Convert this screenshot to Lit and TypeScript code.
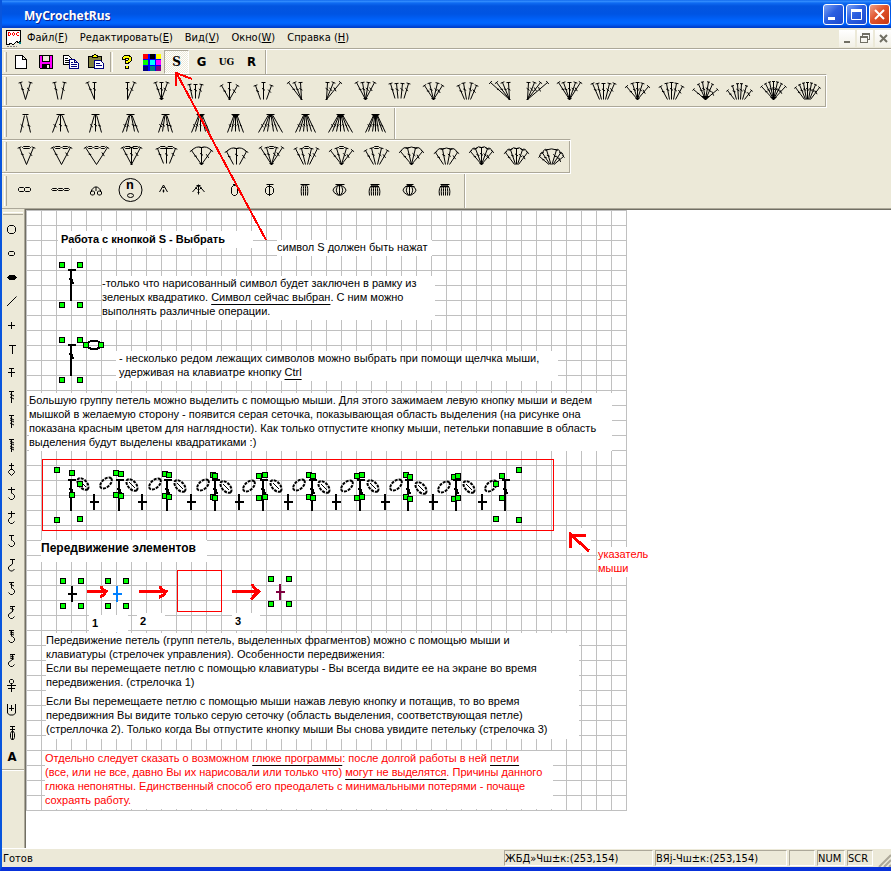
import { LitElement, html, svg, css, nothing } from "lit";
import { customElement, property } from "lit/decorators.js";
import { classMap } from "lit/directives/class-map.js";

type Pt = [number, number];

/* ---------- stitch glyph builders ---------- */

// One stitch stem: a line from (bx,by) to (tx,ty) with a cap and a cross tick.
function stem(tx: number, ty: number, bx: number, by: number, cap = 2, at = 0.4, tick = 1.5): string {
  const len = Math.hypot(tx - bx, ty - by) || 1;
  const nx = -(ty - by) / len;
  const ny = (tx - bx) / len;
  const mx = tx + (bx - tx) * at;
  const my = ty + (by - ty) * at;
  let d = `M${bx} ${by}L${tx} ${ty}`;
  if (cap) d += `M${tx - nx * cap} ${ty - ny * cap}L${tx + nx * cap} ${ty + ny * cap}`;
  d += `M${mx - nx * tick} ${my - ny * tick - 1}L${mx + nx * tick} ${my + ny * tick + 1}`;
  return d;
}

// Small pixel-aligned oval: an octagon with bevels of k.
function oval(cx: number, cy: number, rx: number, ry: number): string {
  const k = Math.min(rx, ry) > 2 ? 2 : 1;
  const h = 2 * (rx - k);
  const v = 2 * (ry - k);
  return `M${cx - rx} ${cy + ry - k}v${-v}l${k} ${-k}h${h}l${k} ${k}v${v}l${-k} ${k}h${-h}z`;
}

interface Fan { tops: number[]; split?: number; arc?: number; base?: number; dot?: number; top?: number; bottom?: number; }

function fanPoints(f: Fan, c: number): { t: Pt; b: Pt }[] {
  const max = Math.max(...f.tops.map(Math.abs));
  const n = f.tops.length;
  return f.tops.map((x, i) => ({
    t: [c + x, (f.top ?? 6.5) + (f.arc ?? 0) * (x / max) ** 2] as Pt,
    b: [c + (f.base ?? 0) + (f.split ?? 0) * (i - (n - 1) / 2), f.bottom ?? 23.5] as Pt,
  }));
}

function fan(f: Fan, c: number): string {
  const cap = f.tops.length > 5 ? 1.5 : 2;
  let d = fanPoints(f, c).map(({ t, b }) => stem(t[0], t[1], b[0], b[1], cap)).join("");
  const w = f.dot ?? 0;
  for (let k = 0; k < w; k++) d += `M${c + (f.base ?? 0) - w + k} ${23.5 - w + 1 + k}h${(w - k) * 2}`;
  return d;
}

const FANS: Fan[] = [
  { tops: [-5, 5] },
  { tops: [-5, 5], split: 3 },
  { tops: [-6, 1], base: 1 },
  { tops: [0, 7] },
  { tops: [-6, 0, 6], dot: 2 },
  { tops: [-6, 0, 6], split: 3, top: 8.5, bottom: 22.5 },
  { tops: [-8, 0, 8], arc: 3, dot: 1 },
  { tops: [-8, 0, 8], arc: 3, split: 3 },
  { tops: [-9, -3, 3], base: 4, dot: 1 },
  { tops: [-4, 2, 9], base: -5, dot: 1 },
  { tops: [-9, -3, 3, 9], dot: 2 },
  { tops: [-9, -3, 3, 9], split: 3, top: 7.5, bottom: 22.5 },
  { tops: [-9, -4, 4, 9], arc: 3, dot: 2 },
  { tops: [-9, -4, 4, 9], arc: 3, split: 2 },
  { tops: [-11, -5, 1, 7], base: 8, dot: 1 },
  { tops: [-7, -1, 5, 12], base: -8, dot: 1 },
  { tops: [-11, -6, 0, 6, 11], dot: 2 },
  { tops: [-11, -6, 0, 6, 11], split: 2, top: 7.5 },
  { tops: [-11, -5, 0, 5, 11], arc: 4, dot: 2 },
  { tops: [-11, -5, 0, 5, 11], arc: 4, split: 2 },
  { tops: [-12, -7, -3, 3, 7, 12], arc: 8, dot: 4, top: 5.5 },
  { tops: [-12, -7, -2, 2, 7, 12], arc: 7, split: 2, top: 7.5 },
  { tops: [-12, -8, -4, 0, 4, 8, 12], arc: 5, dot: 3, top: 5.5 },
  { tops: [-12, -8, -4, 0, 4, 8, 12], arc: 5, split: 1, top: 6.5 },
];

// Decreases: several stems joined under one cap.
function cluster(feet: number[], dot: number): string {
  const c = 17.5;
  const max = Math.max(...feet.map(Math.abs));
  const tick = feet.length > 4 ? 1 : 1.5;
  let d = `M${c - (dot ? 4 : 3)} 6.5h${dot ? 8 : 6}`;
  for (const x of feet) {
    const y = 24.5 - (Math.abs(x) === max ? 0 : 1);
    d += stem(c + x * 0.2, 7.5, c + x, y, 0, 0.6, tick);
  }
  for (let k = 0; k < dot; k++) d += `M${c - dot + k} ${7.5 + k}h${(dot - k) * 2}`;
  return d;
}

const CLUSTERS: [number[], number][] = [
  [[-5, 5], 0],
  [[-8, 0, 8], 1],
  [[-6, 0, 6], 1],
  [[-8, -4, 4, 8], 1],
  [[-7, -3, 3, 7], 1],
  [[-9, -5, 0, 5, 9], 3],
  [[-8, -4, 0, 4, 8], 3],
  [[-12, -7, -3, 3, 7, 12], 2],
  [[-10, -6, -2, 2, 6, 10], 2],
  [[-12, -8, -4, 0, 4, 8, 12], 3],
  [[-10, -7, -3, 0, 3, 7, 10], 3],
];

interface Shell { fan: Fan; chains?: number; dome?: boolean; span?: number; }

function shell(s: Shell): string {
  const c = 18.5;
  let d = fan(s.fan, c);
  const pts = fanPoints(s.fan, c);
  if (s.chains) {
    const span = s.span ?? pts[pts.length - 1].t[0] - pts[0].t[0] - 3;
    const w = span / s.chains;
    for (let i = 0; i < s.chains; i++) {
      d += oval(c - span / 2 + w * (i + 0.5), 6.5, Math.min(w / 2 - 0.5, 4), 1);
    }
  }
  if (s.dome) {
    for (let i = 1; i < pts.length; i++) {
      const [ax, ay] = pts[i - 1].t;
      const [bx, by] = pts[i].t;
      d += `M${ax} ${ay}Q${(ax + bx) / 2} ${Math.min(ay, by) - 2} ${bx} ${by}`;
    }
  }
  return d;
}

const SHELLS: Shell[] = [
  { fan: { tops: [-7, 7] }, chains: 1 },
  { fan: { tops: [-9, 9] }, chains: 2 },
  { fan: { tops: [-11, 11] }, chains: 3 },
  { fan: { tops: [-9, 0, 9], dot: 1 }, chains: 2 },
  { fan: { tops: [-9, 0, 9], split: 3, top: 7.5, bottom: 22.5 }, chains: 2 },
  { fan: { tops: [-10, 0, 10], arc: 3, dot: 2, top: 6.5 }, dome: true },
  { fan: { tops: [-10, 0, 10], arc: 3, split: 3, top: 7.5 }, dome: true },
  { fan: { tops: [-11, -5, 5, 11], dot: 2 }, chains: 1, span: 7 },
  { fan: { tops: [-11, -5, 5, 11], split: 2, top: 7.5 }, chains: 1, span: 7 },
  { fan: { tops: [-11, -5, 5, 11], arc: 3, dot: 2 }, chains: 1, span: 7 },
  { fan: { tops: [-11, -5, 5, 11], arc: 3, split: 2 }, chains: 1, span: 7 },
  { fan: { tops: [-11, -4, 4, 11], arc: 4, dot: 2 }, dome: true },
  { fan: { tops: [-11, -4, 4, 11], arc: 4, split: 2, top: 7.5 }, dome: true },
  { fan: { tops: [-11, -6, 0, 6, 11], arc: 4, dot: 2 }, dome: true },
  { fan: { tops: [-11, -6, 0, 6, 11], arc: 4, split: 1, top: 7.5 }, dome: true },
  { fan: { tops: [-12, -9, -5, 5, 9, 12], arc: 8, split: 1, top: 7.5 }, dome: true },
];

// Ribs that bow out from a cap and meet again below.
function bulb(w: number, ribs: number, cap: number): string {
  const c = 16.5;
  let d = `M${c - cap} 10.5h${cap * 2 + 1}`;
  for (let i = 0; i < ribs; i++) {
    const k = (i / (ribs - 1)) * 2 - 1;
    d += `M${c + k} 11Q${c + k * w * 2} 16 ${c + k} 21.5`;
  }
  return d;
}

// Ribs that hang down from a rounded cap and stay open.
function comb(w: number, ribs: number): string {
  const c = 16.5;
  let d = `M${c - 4} 10.5h9`;
  for (let i = 0; i < ribs; i++) {
    const k = (i / (ribs - 1)) * 2 - 1;
    d += `M${c + k * 2} 11Q${c + k * w * 1.3} 13 ${c + k * w} 21.5`;
  }
  return d;
}

const EXTRAS: string[] = [
  oval(13.5, 15.5, 3, 2) + oval(19.5, 15.5, 3, 2),
  oval(11.5, 15.5, 3, 1) + oval(17.5, 15.5, 3, 1) + oval(23.5, 15.5, 3, 1),
  "M13.5 18v-2l3 -3h3l3 3v2" + oval(14.5, 19, 2, 2) + oval(21.5, 19, 2, 2) + "M18 13v4",
  "",
  "M15.5 11l-4 7M15.5 11l4 7M14.5 13.5h2M15.5 15.5v3M14.5 17h2",
  "M15.5 10.5v10M15.5 11l-6 7M15.5 11l6 7M13.5 11.5h4M12.5 13.5l2 2M18.5 13.5l-2 2M14.5 18.5h2",
  oval(16.5, 16.5, 3, 5) + "M15 10.5h4",
  oval(16.5, 16.5, 4, 4) + "M13.5 10.5h7M16.500 11v11",
  comb(3, 4),
  bulb(6, 5, 4),
  comb(5, 6) + "M13 12.5h8",
  bulb(6, 5, 3) + "M12.5 12.5h9",
  comb(5, 6) + "M12 12.5h9",
];

const SIDE: string[] = [
  oval(9.5, 12.5, 4, 4),
  oval(9.5, 12.5, 3, 2),
  "solid",
  "M5 17l9.5 -9.5",
  "M9.5 9v7M6 12.5h7",
  "M10.5 8v9M7 8.5h7",
  "M9.5 7v9M7 7.5h5M6 11.5h7",
  "M9.5 6v12M7 6.5h5M8 9l4 2M8 12l4 2",
  "M9.5 6v13M7 6.5h5M8 9l4 2M8 11l4 2M8 14l4 2",
  "M9.5 6v13M7 6.5h5M8 8l4 2M8 10l4 2M8 13l4 2M8 15l4 2",
  "M9.5 6v7M7 8.5h5M9.5 11.5l-3 3v1l3 3l3 -3v-1z",
  "M9.5 6v6M6 8.5h7M9.5 12.5h1l2 2v2l-2 2h-2l-2 -2",
  "M9.5 6v6M6 8.5h7M9.5 12.5h-1l-2 2v2l2 2h2l2 -2",
  "M7 6.5h5M9.5 6v5M9.5 11.5h1l2 2v2l-2 2h-2l-2 -2",
  "M8 6.5h5M10.5 6v5l-4 3v2l2 2h2l2 -2",
  "M7 5.5h5M9.5 5v6M8 7l4 2M9.5 11.5h1l2 2v2l-2 2h-2l-2 -2",
  "M8 5.5h5M10.5 5v6M8 7l4 2M10.5 10.5l-4 3v2l2 2h2l2 -2",
  "M7 5.5h5M9.5 5v6M8 7l4 1M8 9l4 1M9.5 11.5h1l2 2v2l-2 2h-2l-2 -2",
  "M8 5.5h5M10.5 5v6M8 7l4 1M8 9l4 1M10.5 10.5l-4 3v2l2 2h2l2 -2",
  oval(9.5, 8.5, 2, 2) + "M9.5 11v8M5 12.5h9M6 15.5h7",
  "M5.5 7v9l2 2h4l2 -2v-9M9.5 8v6M7 11.5h5",
  "M8 5.5h5M8 8.5h5M10.5 5v13M8.5 12.5v4l1 2h2l1 -2v-4l-1 -2h-2z",
  "A",
];

/* ---------- palette buttons ---------- */

@customElement("stitch-bar")
export class StitchBar extends LitElement {
  @property({ attribute: false }) glyphs: string[] = [];
  @property({ type: Boolean }) boxed = false;
  @property({ type: Number }) cell = 35;
  @property({ type: Number }) tall = 31;

  static styles = css`
    :host { display: block; }
    .bar {
      display: flex; width: fit-content; box-sizing: border-box;
      padding: 0 2px 0 6px; border-right: 1px solid #fff;
      box-shadow: inset -1px 0 #aca899; position: relative;
    }
    .bar.boxed {
      border-top: 1px solid #aca899; border-bottom: 1px solid #fff;
      box-shadow: inset 0 1px #fff, inset -1px -1px #aca899; padding-top: 1px; padding-bottom: 1px;
    }
    .bar::before {
      content: ""; position: absolute; left: 2px; top: 2px; bottom: 2px; width: 1px;
      border-left: 1px solid #fff; border-right: 1px solid #aca899;
    }
    button { border: 0; padding: 0; background: none; display: block; font: inherit; }
    button:hover { background: #f6f4ea; }
    svg { display: block; }
    .ink { fill: none; stroke: #000; stroke-width: 1; }
    .letter { font: bold 13px "Liberation Mono", monospace; }
  `;

  render() {
    return html`<div class=${classMap({ bar: true, boxed: this.boxed })} role="toolbar">
      ${this.glyphs.map(
        (d) => html`<button type="button" aria-label="stitch">
          <svg width=${this.cell} height=${this.tall}>
            ${d
              ? svg`<path class="ink" d=${d} />`
              : svg`<circle class="ink" cx="17.5" cy="16" r="11.5" /><text class="letter" x="13" y="15">n</text><ellipse class="ink" cx="17.5" cy="21.5" rx="3" ry="2" />`}
          </svg>
        </button>`
      )}
    </div>`;
  }
}

/* ---------- document canvas ---------- */

const SQUARES: Pt[] = [
  [62, 265], [80, 265], [62, 305], [80, 305], [62, 340], [80, 340], [62, 380], [80, 380], [86, 345], [101, 345],
  [57, 470], [72, 473], [80, 484], [72, 495], [57, 520], [80, 519],
  [116, 473], [121, 474], [116, 495], [121, 496],
  [165, 474], [169, 475], [165, 496], [169, 497],
  [213, 475], [215, 476], [213, 497], [215, 498],
  [259, 476], [265, 475], [259, 498], [265, 497],
  [309, 475], [313, 476], [309, 497], [313, 498],
  [357, 476], [362, 475], [357, 498], [362, 497],
  [406, 475], [410, 477], [406, 497], [410, 499],
  [454, 477], [458, 476], [454, 499], [458, 498],
  [502, 476], [496, 484], [502, 498], [496, 519], [519, 470], [519, 520],
  [63, 581], [81, 581], [63, 606], [81, 606],
  [108, 581], [126, 581], [108, 606], [126, 606],
  [271, 579], [289, 579], [271, 604], [289, 604],
];

const TREBLES: Pt[] = [
  [71, 270], [71, 345],
  [71, 480], [119, 480], [167, 480], [215, 480], [263, 480], [312, 480], [360, 480], [408, 480], [456, 480], [505, 480],
];
const CROSSES: [number, number, string][] = [
  ...[94, 142, 191, 239, 288, 336, 385, 433, 482].map((x) => [x, 501, "#000"] as [number, number, string]),
  [72, 593, "#000"], [117, 593, "#0080ff"], [280, 591, "#800040"],
];
const LEAVES_UP: Pt[] = [[106, 483], [155, 484], [203, 485], [249, 486], [299, 485], [347, 486], [396, 485], [444, 487], [491, 486]];
const LEAVES_DOWN: Pt[] = [[83, 484], [132, 485], [180, 486], [226, 487], [276, 486], [324, 487], [373, 486], [421, 488], [469, 487]];

interface Note { x: number; y: number; w: number; body: unknown; kind?: string; }

const NOTES: Note[] = [
  { x: 58, y: 231, w: 195, kind: "bold pad", body: html`Работа с кнопкой S - Выбрать` },
  { x: 277, y: 240, w: 155, body: html`символ S должен быть нажат` },
  {
    x: 102, y: 276, w: 333,
    body: html`-только что нарисованный символ будет заключен в рамку из<br />зеленых квадратико. <u>Символ сейчас выбран</u>. С ним можно<br />выполнять различные операции.`,
  },
  {
    x: 116, y: 351, w: 442, kind: "pad",
    body: html`- несколько редом лежащих символов можно выбрать при помощи щелчка мыши,<br />удерживая на клавиатре кнопку <u>Ctrl</u>`,
  },
  {
    x: 29, y: 393, w: 583,
    body: html`Большую группу петель можно выделить с помощью мыши. Для этого зажимаем левую кнопку мыши и ведем<br />мышкой в желаемую сторону - появится серая сеточка, показывающая область выделения (на рисунке она<br />показана красным цветом для наглядности). Как только отпустите кнопку мыши, петельки попавшие в область<br />выделения будут выделены квадратиками :)`,
  },
  { x: 41, y: 540, w: 166, kind: "bold tall", body: html`Передвижение элементов` },
  { x: 598, y: 547, w: 55, kind: "red", body: html`указатель<br />мыши` },
  { x: 89, y: 615, w: 39, kind: "bold pad", body: html`1` },
  { x: 137, y: 613, w: 28, kind: "bold pad", body: html`2` },
  { x: 232, y: 613, w: 28, kind: "bold pad", body: html`3` },
  {
    x: 46, y: 633, w: 533,
    body: html`Передвижение петель (групп петель, выделенных фрагментов) можно с помощью мыши и<br />клавиатуры (стрелочек управления). Особенности передвижения:<br />Если вы перемещаете петлю с помощью клавиатуры - Вы всегда видите ее на экране во время<br />передвижения. (стрелочка 1)`,
  },
  {
    x: 46, y: 691, w: 533, kind: "late",
    body: html`Если Вы перемещаете петлю с помощью мыши нажав левую кнопку и потащив, то во время<br />передвижния Вы видите только серую сеточку (область выделения, соответствующая петле)<br />(стреллочка 2). Только когда Вы отпустите кнопку мыши Вы снова увидите петельку (стрелочка 3)`,
  },
  {
    x: 45, y: 751, w: 508, kind: "red",
    body: html`Отдельно следует сказать о возможном <u>глюке программы</u>: после долгой работы в ней <u>петли</u><br />(все, или не все, давно Вы их нарисовали или только что) <u>могут не выделятся</u>. Причины данного<br />глюка непонятны. Единственный способ его преодалеть с минимальными потерями - почаще<br />сохраять работу.`,
  },
];

// Canvas origin inside the window; drawing data is kept in window units.
const OX = 26;
const OY = 210;

@customElement("stitch-sheet")
export class StitchSheet extends LitElement {
  static styles = css`
    :host { display: block; position: relative; background: #fff; min-height: 638px; overflow: hidden; }
    .grid {
      position: absolute; left: 0; top: 0; width: 601px; height: 601px;
      background-image: linear-gradient(to right, #c0c0c0 1px, transparent 1px), linear-gradient(#c0c0c0 1px, transparent 1px);
      background-size: 15px 15px;
    }
    .art { position: absolute; left: 0; top: 0; width: 640px; height: 601px; shape-rendering: crispEdges; }
    .note {
      position: absolute; box-sizing: border-box; background: #fff; white-space: nowrap; margin: 0;
      font: 11px/14px "Liberation Sans", Arial, sans-serif; color: #000; padding-bottom: 2px;
    }
    .pad { padding-left: 3px; }
    .bold { font-weight: bold; padding-top: 1px; }
    .tall { font-size: 12px; padding-bottom: 7px; }
    .late { padding-top: 3px; padding-bottom: 3px; }
    .red { color: #f00; }
    u { text-decoration-color: #000; text-underline-offset: 3px; text-decoration-thickness: 1px; text-decoration-skip-ink: none; }
    .sq { fill: #0f0; stroke: #000; }
    .thin { fill: none; stroke: #000; stroke-width: 1; }
    .leaf { fill: none; stroke: #000; stroke-width: 2; stroke-dasharray: 3 1; shape-rendering: auto; }
    .frame { fill: none; stroke: #f00; }
    .arrow { fill: none; stroke: #f00; stroke-width: 3; }
    .mask { fill: #fff; }
  `;

  render() {
    return html`
      <div class="grid"></div>
      ${NOTES.map(
        (n) => html`<p class="note ${n.kind ?? ""}" style="left:${n.x - OX}px;top:${n.y - OY}px;min-width:${n.w}px">${n.body}</p>`
      )}
      <svg class="art" viewBox="26 210 640 601" aria-hidden="true">
        <rect class="mask" x="567" y="528" width="24" height="25" />
        <rect class="frame" x="42.5" y="459.5" width="511" height="71" />
        <rect class="frame" x="177.5" y="570.5" width="44" height="41" />
        ${TREBLES.map(
          ([x, y]) => svg`<path d="M${x - 3} ${y - 1}h8v2h-8zM${x - 1} ${y}h2v31h-2zM${x - 2} ${y + 8}h3v1h1v3h1v2h-2v-1h-1v-3h-2z" />`
        )}
        <ellipse cx="94" cy="345" rx="8" ry="4" fill="none" stroke="#000" stroke-width="2" />
        ${CROSSES.map(([x, y, c]) => svg`<path fill=${c} d="M${x - 1} ${y - 7}h2v16h-2zM${x - 4} ${y}h9v2h-9z" />`)}
        ${LEAVES_UP.map(([x, y]) => svg`<ellipse class="leaf" cx=${x} cy=${y} rx="7" ry="4" transform="rotate(-42 ${x} ${y})" />`)}
        ${LEAVES_DOWN.map(
          ([x, y]) => svg`<g transform="rotate(48 ${x} ${y})"><ellipse class="leaf" cx=${x} cy=${y} rx="7" ry="4" /><path class="thin" d="M${x - 4} ${y}h8" /></g>`
        )}
        ${SQUARES.map(([x, y]) => svg`<rect class="sq" x=${x - 2.5} y=${y - 2.5} width="5" height="5" />`)}
        <path class="arrow" d="M87 591.5H105M101 586q1 4 5 5.5q-2 4 -6 5M139 591.5H165M160 586q1 4 6 5.5q-2 4 -7 6M232 591.5H258M252 584q2 5 7 7.5q-4 3 -8 8" />
        <path class="arrow" d="M570.5 548V534.5L589 551M570 535.5H586" />
      </svg>
    `;
  }
}

/* ---------- application window ---------- */

@customElement("app-root")
export class AppRoot extends LitElement {
  static styles = css`
    :host { display: block; }
    .window {
      position: relative; display: flex; flex-direction: column; min-height: 100vh; box-sizing: border-box;
      background: #ece9d8; border-left: 2px solid #0855dd; border-bottom: 4px solid #0831d9;
      font: 11px/14px "DejaVu Sans Condensed", Tahoma, sans-serif; color: #000; overflow: hidden;
    }
    button { border: 0; padding: 0; background: none; font: inherit; color: inherit; }
    svg { display: block; }
    .title {
      display: flex; align-items: center; height: 28px; margin-left: -2px; padding: 0 1px 0 24px;
      background: linear-gradient(#0058e6 0, #3a93ff 1px, #0f6bf2 3px, #0355e0 6px, #0054e3 14px, #0062fb 20px, #0066ff 23px, #0058f0 25px, #0040cc 27px);
    }
    .title h1 { margin: 0; flex: 1; padding-top: 3px; color: #fff; font: bold 12px/16px "Noto Sans", sans-serif; text-shadow: 1px 1px #0a1f8f; }
    .caption { display: flex; gap: 2px; }
    .caption button {
      width: 21px; height: 21px; border: 1px solid #fff; border-radius: 3px;
      background: linear-gradient(135deg, #7ea3f5, #2c5fe0 45%, #1b49cf);
    }
    .caption .close { background: linear-gradient(135deg, #f0a088, #e0532c 45%, #c8370f); }
    .menu { display: flex; align-items: center; height: 20px; padding-left: 3px; }
    .menu nav { display: flex; gap: 12px; flex: 1; padding-left: 5px; }
    .mdi { display: flex; gap: 2px; }
    .mdi button { width: 16px; height: 17px; background: linear-gradient(#fff, #f2f0e6); }
    .bars { border-top: 1px solid #aca899; box-shadow: inset 0 1px #fff; padding-top: 1px; }
    .std { display: flex; align-items: center; width: fit-content; height: 24px; position: relative; padding: 0 2px 0 6px; border-right: 1px solid #fff; box-shadow: inset -1px 0 #aca899; }
    .std::before {
      content: ""; position: absolute; left: 2px; top: 2px; bottom: 2px; width: 1px;
      border-left: 1px solid #fff; border-right: 1px solid #aca899;
    }
    .std button { width: 25px; height: 24px; display: grid; place-items: center; }
    .std .rule { width: 1px; height: 20px; margin: 0 1px 0 2px; border-left: 1px solid #aca899; border-right: 1px solid #fff; }
    .std .mode { font: bold 13px/16px "DejaVu Sans Condensed", sans-serif; }
    .std .serif { font-family: "DejaVu Serif", serif; font-size: 12px; }
    .std .small { font-family: "DejaVu Serif", serif; font-size: 9px; }
    .std .on {
      border: 1px solid; border-color: #aca899 #fff #fff #aca899; box-sizing: border-box;
      background: repeating-conic-gradient(#fff 0 25%, #ece9d8 0 50%) 0 0 / 2px 2px;
    }
    .work { display: flex; flex: 1; border-top: 1px solid #aca899; }
    .side { width: 22px; padding-top: 8px; border-right: 1px solid #aca899; position: relative; }
    .side::before { content: ""; position: absolute; top: 3px; left: 1px; right: 1px; height: 1px; border-top: 1px solid #fff; border-bottom: 1px solid #aca899; }
    .tools { border-bottom: 1px solid #aca899; box-shadow: 0 1px #fff; }
    .tools button { display: block; width: 22px; height: 24px; }
    .tools .letter { font: bold 13px/24px "DejaVu Sans Condensed", sans-serif; padding-right: 2px; }
    .ink { fill: none; stroke: #000; }
    .crisp { shape-rendering: crispEdges; }
    stitch-sheet { flex: 1; min-width: 0; border-left: 1px solid #716f64; border-top: 1px solid #716f64; }
    .status { display: flex; align-items: center; gap: 2px; height: 18px; border-top: 1px solid #fff; }
    .status .ready { flex: 1; padding: 2px 0 0 1px; }
    .pane { box-sizing: border-box; height: 16px; line-height: 16px; border: 1px solid; border-color: #aca899 #fff #fff #aca899; white-space: nowrap; }
    .w1 { width: 149px; } .w2 { width: 132px; } .w3 { width: 26px; } .w4 { width: 28px; } .w5 { width: 26px; }
    .grip { margin-left: 3px; align-self: flex-end; }
    .pointer { position: absolute; left: 168px; top: 68px; pointer-events: none; fill: none; stroke: #f00; stroke-width: 2; shape-rendering: crispEdges; }
  `;

  private menuItem(label: string, key: string) {
    return html`<button type="button">${label}(<u>${key}</u>)</button>`;
  }

  private sideTool(d: string) {
    if (d === "A") return html`<button type="button" class="letter">A</button>`;
    return html`<button type="button" aria-label="stitch">
      <svg width="22" height="24">
        ${d === "solid"
          ? svg`<path class="crisp" d="M7 10h6v1h1v1h1v1h-1v1h-1v1h-6v-1h-1v-1h-1v-1h1v-1h1z" />`
          : svg`<path class="ink" d=${d} />`}
      </svg>
    </button>`;
  }

  render() {
    const swatch = ["#f00", "#000", "#ff0", "#0f0", "#0ff", "#f0f", "#000080", "#008080", "#800080"];
    return html`
      <div class="window">
        <header class="title">
          <h1>MyCrochetRus</h1>
          <div class="caption">
            <button type="button" aria-label="minimize"><svg width="19" height="19"><path fill="#fff" d="M4 12h7v3h-7z" /></svg></button>
            <button type="button" aria-label="maximize"><svg width="19" height="19"><path fill="none" stroke="#fff" d="M4.5 5v9.5h10V5" /><path fill="#fff" d="M4 4h11v3h-11z" /></svg></button>
            <button type="button" class="close" aria-label="close"><svg width="19" height="19"><path stroke="#fff" stroke-width="2" d="M5 5l9 9M14 5l-9 9" /></svg></button>
          </div>
        </header>

        <div class="menu">
          <svg class="crisp" width="17" height="18">
            <path fill="#fff" stroke="#000" d="M1.5 1.5h14v11l-2 1l-2 -1l-3 3l-3 -1l-2 1h-2z" />
            <path fill="none" stroke="#f00" d="M3.5 3v4M3 3.5h2M5.5 4v2M3 6.5h2M7.5 4v2M8 3.5h1M9.5 4v2M8 6.5h1M11.5 4v2M12 3.5h2M12 6.5h2" />
            <path fill="none" stroke="#808080" d="M2 17.5h10" stroke-dasharray="2 1" />
            <path fill="#008080" d="M14 13h2v2h-2z" />
          </svg>
          <nav>
            ${this.menuItem("Файл", "F")}${this.menuItem("Редактировать", "E")}${this.menuItem("Вид", "V")}${this.menuItem("Окно", "W")}${this.menuItem("Справка ", "H")}
          </nav>
          <div class="mdi">
            <button type="button" aria-label="minimize document"><svg width="16" height="17"><path fill="#716f64" d="M5 11h6v2h-6z" /></svg></button>
            <button type="button" aria-label="restore document"><svg class="crisp" width="16" height="17"><path fill="none" stroke="#716f64" d="M3.5 7v5.5h7V7M12.5 4v5.5h-2M5.5 4v2" /><path fill="#716f64" d="M3 6h8v2h-8zM5 3h8v2h-8z" /></svg></button>
            <button type="button" aria-label="close document"><svg width="16" height="17"><path stroke="#716f64" stroke-width="2" d="M5 5l7 7M12 5l-7 7" /></svg></button>
          </div>
        </div>

        <div class="bars">
          <div class="std" role="toolbar">
            <button type="button" aria-label="new"><svg class="crisp" width="16" height="16"><path fill="#fff" stroke="#000" d="M2.5 1.5h7l4 4v9h-11zM9.5 1.5v4h4" /></svg></button>
            <button type="button" aria-label="save"><svg class="crisp" width="16" height="16"><path d="M1 1h14v14H2l-1 -1z" /><path fill="#f0f" d="M2 2h2v6h8v-6h2v12h-2v-4H4v4H2z" /><path fill="#ece9d8" d="M5 2h6v5H5zM9 11h2v3H9z" /></svg></button>
            <button type="button" aria-label="copy"><svg class="crisp" width="16" height="16"><path fill="#fff" stroke="#000" d="M.5 1.5h5l3 3v6h-8z" /><path fill="none" stroke="#000" d="M2 4.5h3M2 6.5h5M2 8.5h5" /><path fill="#fff" stroke="#000080" d="M6.5 5.5h5l4 4v5h-9zM11.5 5.5v3h3" /><path stroke="#000080" d="M8 8.5h2M8 10.5h6M8 12.5h6" /></svg></button>
            <button type="button" aria-label="paste"><svg class="crisp" width="16" height="16"><path fill="#808040" stroke="#000" d="M.5 2.5h13v11h-13z" /><path fill="#ff0" stroke="#000" d="M4.5 3.5v-2h1l1 -1h1l1 1h1v2z" /><path fill="#fff" stroke="#000080" d="M6.5 6.5h6l3 3v5h-9z" /><path stroke="#000080" d="M8 9.5h4M8 11.5h6" /></svg></button>
            <span class="rule"></span>
            <button type="button" aria-label="help"><svg class="crisp" width="16" height="16"><path fill="none" stroke="#000" stroke-width="4" d="M5 6V4q0 -1 3 -1t3 2q0 2 -3 3v2M8 12v3" /><path fill="none" stroke="#ff0" stroke-width="2" d="M5 5V4q0 -1 3 -1t3 2q0 2 -3 3v1M8 12v2" /></svg></button>
            <button type="button" aria-label="colors"><svg class="crisp" width="18" height="17"><path fill="#00f" d="M0 0h18v17H0z" />${swatch.map(
              (c, i) => svg`<rect x=${(i % 3) * 6 + (i % 3 ? 1 : 0)} y=${Math.floor(i / 3) * 6} width="5" height="5" fill=${c} />`
            )}</svg></button>
            <button type="button" class="mode serif on" aria-pressed="true">S</button>
            <button type="button" class="mode">G</button>
            <button type="button" class="mode small">UG</button>
            <button type="button" class="mode">R</button>
          </div>
          <stitch-bar boxed .cell=${34} .tall=${30} .glyphs=${FANS.map((f) => fan(f, 17.5))}></stitch-bar>
          <stitch-bar .glyphs=${CLUSTERS.map(([feet, dot]) => cluster(feet, dot))}></stitch-bar>
          <stitch-bar boxed .glyphs=${SHELLS.map(shell)}></stitch-bar>
          <stitch-bar .tall=${34} .glyphs=${EXTRAS}></stitch-bar>
        </div>

        <main class="work">
          <div class="side">
            <div class="tools" role="toolbar">${SIDE.map((d) => this.sideTool(d))}</div>
          </div>
          <stitch-sheet></stitch-sheet>
        </main>

        <footer class="status">
          <span class="ready">Готов</span>
          <span class="pane w1">ЖБД»Чш±к:(253,154)</span>
          <span class="pane w2">ВЯј-Чш±к:(253,154)</span>
          <span class="pane w3">${nothing}</span>
          <span class="pane w4">NUM</span>
          <span class="pane w5">SCR</span>
          <svg class="grip" width="13" height="14"><path stroke="#aca899" stroke-width="2" d="M1 14L13 2M6 14L13 7M11 14l2 -2" /></svg>
        </footer>

        <svg class="pointer" width="110" height="180"><path d="M96 172L7 6M6 18V5L22 11" /></svg>
      </div>
    `;
  }
}
